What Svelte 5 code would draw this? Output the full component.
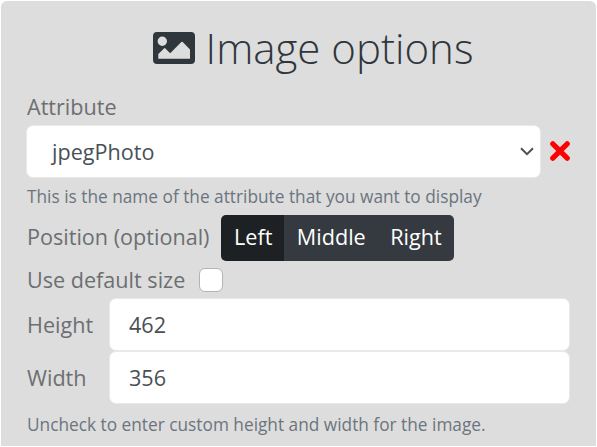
<script>
  const positions = ['Left', 'Middle', 'Right'];
  let position = $state('Left');
  let height = $state('462');
  let width = $state('356');
  let useDefault = $state(false);
</script>

<section class="card">
  <h1>
    <svg class="picture" viewBox="0 0 42 32" aria-hidden="true">
      <path
        fill="#2f363c"
        fill-rule="evenodd"
        d="M4 0H38a4 4 0 0 1 4 4V28a4 4 0 0 1-4 4H4a4 4 0 0 1-4-4V4a4 4 0 0 1 4-4ZM9.300 4.600a4.700 4.700 0 1 0 0 9.400a4.700 4.700 0 0 0 0-9.400ZM5.300 26.700H37V17.500L29.700 10.100a1 1 0 0 0-1.400 0L17.200 21.200L12.400 16.400a1 1 0 0 0-1.400 0L5.300 22Z"
      />
    </svg>
    <span>Image options</span>
  </h1>

  <div class="label attribute">Attribute</div>
  <div class="row">
    <div class="field select">
      <span>jpegPhoto</span>
      <svg width="14" height="9" viewBox="0 0 14 9" aria-hidden="true">
        <path d="M1 1.300L7 7.200L13 1.300" fill="none" stroke="#495057" stroke-width="2" />
      </svg>
    </div>
    <svg class="remove" width="20" height="20" viewBox="0 0 20 20" aria-label="Remove">
      <path d="M2.800 2.800L17.200 17.200M17.200 2.800L2.800 17.200" stroke="#f00" stroke-width="5.200" stroke-linecap="round" />
    </svg>
  </div>
  <p class="help first">This is the name of the attribute that you want to display</p>

  <div class="row position">
    <span class="label">Position (optional)</span>
    <div class="group">
      {#each positions as p}
        <button class:active={position === p} onclick={() => (position = p)}>{p}</button>
      {/each}
    </div>
  </div>

  <label class="row default">
    <span class="label">Use default size</span>
    <input type="checkbox" bind:checked={useDefault} />
  </label>

  <label class="row">
    <span class="label dim">Height</span>
    <input class="field" type="text" bind:value={height} />
  </label>
  <label class="row">
    <span class="label dim">Width</span>
    <input class="field" type="text" bind:value={width} />
  </label>
  <p class="help last">Uncheck to enter custom height and width for the image.</p>
</section>

<style>
  :global(body) {
    background: #fff;
    overflow: hidden;
  }
  .card {
    box-sizing: border-box;
    width: 595px;
    height: 445px;
    margin: 1px 0 0 1px;
    padding: 0 26px;
    border-radius: 6px 6px 0 0;
    background: #ddd;
    font-family: 'Open Sans', sans-serif;
    font-size: 21.600px;
    line-height: 33px;
    color: #6c6f72;
    display: flow-root;
  }
  h1 {
    display: flex;
    align-items: center;
    justify-content: center;
    gap: 11px;
    height: 53px;
    margin: 20px 0 0;
    padding-left: 29px;
    font-size: 42px;
    font-weight: 300;
    line-height: 53px;
    color: #2f363c;
  }
  .picture {
    width: 42px;
    height: 32px;
  }
  .attribute {
    margin-top: 16px;
    height: 35px;
  }
  .row {
    display: flex;
    align-items: center;
  }
  .label {
    white-space: nowrap;
  }
  .field {
    box-sizing: border-box;
    height: 53px;
    border: 1px solid #e9e9e9;
    border-radius: 7px;
    background: #fff;
    color: #495057;
    font: inherit;
  }
  .select {
    display: flex;
    align-items: center;
    justify-content: space-between;
    width: 515px;
    margin-left: -1px;
    padding: 0 6px 0 25px;
  }
  .remove {
    margin: 0 0 1px 9px;
  }
  .help {
    margin: 0;
    font-size: 17.280px;
    line-height: 24px;
    color: #6c757d;
    white-space: nowrap;
  }
  .first {
    margin-top: 7px;
  }
  .position {
    margin-top: 6px;
    height: 46px;
  }
  .position .label {
    padding-bottom: 4px;
  }
  .group {
    display: flex;
    margin-left: 12px;
    border-radius: 5px;
    overflow: hidden;
  }
  button {
    height: 46px;
    padding: 0 12px 3px 12.500px;
    border: 0;
    background: #343a40;
    color: #fff;
    font: inherit;
  }
  button.active {
    background: #1d2124;
  }
  .default {
    height: 37px;
  }
  input[type='checkbox'] {
    appearance: none;
    box-sizing: border-box;
    width: 24px;
    height: 24px;
    margin: 0 0 0 14px;
    border: 1px solid #adb5bd;
    border-radius: 6px;
    background: #fff;
  }
  .dim {
    width: 82px;
  }
  input.field {
    width: 461px;
    margin: 0;
    padding: 0 19px;
    outline: none;
  }
  .last {
    margin-top: 9px;
  }
</style>
